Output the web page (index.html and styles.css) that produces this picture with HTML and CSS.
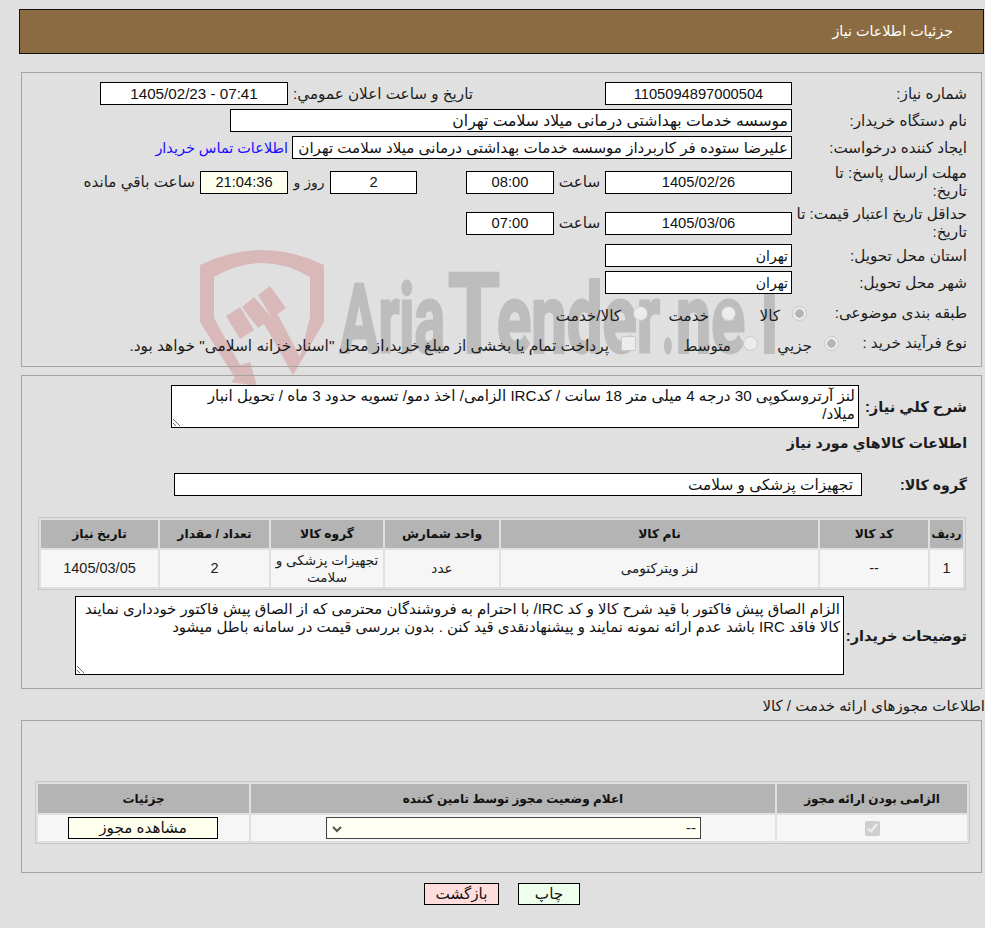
FILE: index.html
```html
<!DOCTYPE html>
<html lang="fa" dir="rtl">
<head>
<meta charset="utf-8">
<title>جزئیات اطلاعات نیاز</title>
<link rel="stylesheet" href="styles.css">
</head>
<body>
<div class="page">
  <svg class="watermark" viewBox="190 240 630 200" width="630" height="200" aria-hidden="true">
    <path class="wm-red" d="M200 265Q262 235 324 265V322L293 375L263 322L277 313L300 357L310 317V277Q262 249 214 277V318L240 365L250 362L257 386L231 382L235 378L200 322Z"/>
    <path class="wm-red" d="M226 316L240 307L254 330L240 339ZM242 307L254 297L272 318L258 328ZM258 295L270 286L286 308L272 318Z"/>
    <text class="wm-text" x="340" y="352" textLength="105" lengthAdjust="spacingAndGlyphs">Aria</text>
    <text class="wm-text wm-cap" x="448" y="352" textLength="52" lengthAdjust="spacingAndGlyphs">T</text>
    <text class="wm-text" x="497" y="352" textLength="163" lengthAdjust="spacingAndGlyphs">ender</text>
    <text class="wm-text" x="662" y="352" textLength="12" lengthAdjust="spacingAndGlyphs">.</text>
    <text class="wm-text" x="676" y="352" textLength="69" lengthAdjust="spacingAndGlyphs">ne</text>
    <text class="wm-text wm-cap" x="750" y="352" textLength="39" lengthAdjust="spacingAndGlyphs">T</text>
  </svg>

  <header class="title-bar">جزئیات اطلاعات نیاز</header>

  <section class="panel panel-info">
    <div class="row">
      <span class="label">شماره نیاز:</span>
      <input class="field w187 center" value="1105094897000504" readonly>
      <span class="label announce">تاریخ و ساعت اعلان عمومي:</span>
      <input class="field w188 center stamp" value="07:41 - 1405/02/23" readonly>
    </div>
    <div class="row mt4">
      <span class="label">نام دستگاه خریدار:</span>
      <input class="field w562 wide" value="موسسه خدمات بهداشتی درمانی میلاد سلامت تهران" readonly>
    </div>
    <div class="row mt4">
      <span class="label">ایجاد کننده درخواست:</span>
      <input class="field w500" value="علیرضا ستوده فر کاربرداز موسسه خدمات بهداشتی درمانی میلاد سلامت تهران" readonly>
      <a class="contact" href="#">اطلاعات تماس خریدار</a>
    </div>
    <div class="row tall mt5">
      <span class="label narrow">مهلت ارسال پاسخ: تا تاریخ:</span>
      <input class="field w187 center" value="1405/02/26" readonly>
      <span class="unit">ساعت</span>
      <input class="field w88 center" value="08:00" readonly>
      <input class="field w87 center gap49" value="2" readonly>
      <span class="unit days">روز و</span>
      <input class="field w88 center timer" value="21:04:36" readonly>
      <span class="remain">ساعت باقي مانده</span>
    </div>
    <div class="row tall mt5">
      <span class="label">حداقل تاریخ اعتبار قیمت: تا تاریخ:</span>
      <input class="field w187 center" value="1405/03/06" readonly>
      <span class="unit">ساعت</span>
      <input class="field w88 center" value="07:00" readonly>
    </div>
    <div class="row mt3">
      <span class="label">استان محل تحویل:</span>
      <input class="field w187 short" value="تهران" readonly>
    </div>
    <div class="row mt4">
      <span class="label">شهر محل تحویل:</span>
      <input class="field w187 short" value="تهران" readonly>
    </div>
    <div class="row choice choice-a">
      <span class="label">طبقه بندی موضوعی:</span>
      <label class="opt o71"><input type="radio" name="cat" disabled checked><span>کالا</span></label>
      <label class="opt o88"><input type="radio" name="cat" disabled><span>خدمت</span></label>
      <label class="opt"><input type="radio" name="cat" disabled><span>کالا/خدمت</span></label>
    </div>
    <div class="row choice choice-b">
      <span class="label">نوع فرآیند خرید :</span>
      <label class="opt o81"><input type="radio" name="proc" disabled checked><span>جزيي</span></label>
      <label class="opt o122"><input type="radio" name="proc" disabled><span>متوسط</span></label>
      <label class="opt"><input type="checkbox" disabled><span>پرداخت تمام یا بخشی از مبلغ خرید،از محل "اسناد خزانه اسلامی" خواهد بود.</span></label>
    </div>
  </section>

  <section class="panel panel-goods">
    <div class="row">
      <span class="label strong l108">شرح كلي نياز:</span>
      <textarea class="note note-short" readonly>لنز آرتروسکوپی 30 درجه 4 میلی متر 18 سانت / کدIRC الزامی/ اخذ دمو/ تسویه حدود 3 ماه / تحویل انبار میلاد/</textarea>
    </div>
    <h2 class="sub-title">اطلاعات كالاهاي مورد نياز</h2>
    <div class="row group-row">
      <span class="label strong l105">گروه کالا:</span>
      <input class="field w688 indent" value="تجهیزات پزشکی و سلامت" readonly>
    </div>
    <table class="grid goods">
      <thead>
        <tr><th class="c1">ردیف</th><th class="c2">کد کالا</th><th class="c3">نام کالا</th><th class="c4">واحد شمارش</th><th class="c5">گروه کالا</th><th class="c6">تعداد / مقدار</th><th class="c7">تاریخ نیاز</th></tr>
      </thead>
      <tbody>
        <tr><td class="num">1</td><td class="num">--</td><td>لنز ویترکتومی</td><td>عدد</td><td>تجهیزات پزشکی و سلامت</td><td class="num">2</td><td class="num">1405/03/05</td></tr>
      </tbody>
    </table>
    <div class="row buyer-row">
      <span class="label strong l123">توضیحات خریدار:</span>
      <textarea class="note note-tall" readonly>الزام الصاق پیش فاکتور با قید شرح کالا و کد IRC/ با احترام به فروشندگان محترمی که از الصاق پیش فاکتور خودداری نمایند کالا فاقد IRC باشد عدم ارائه نمونه نمایند و پیشنهادنقدی قید کنن . بدون بررسی قیمت در سامانه باطل میشود</textarea>
    </div>
  </section>

  <h2 class="license-title">اطلاعات مجوزهای ارائه خدمت / کالا</h2>

  <section class="panel panel-license">
    <table class="grid license">
      <thead>
        <tr><th class="d1">الزامی بودن ارائه مجوز</th><th class="d2">اعلام وضعیت مجوز توسط تامین کننده</th><th class="d3">جزئیات</th></tr>
      </thead>
      <tbody>
        <tr>
          <td><input class="check" type="checkbox" checked disabled></td>
          <td><select class="status"><option>--</option></select></td>
          <td><button class="view" type="button">مشاهده مجوز</button></td>
        </tr>
      </tbody>
    </table>
  </section>

  <div class="actions">
    <button class="btn print" type="button">چاپ</button>
    <button class="btn back" type="button">بازگشت</button>
  </div>
</div>
</body>
</html>
```
FILE: styles.css
```css
* { box-sizing: border-box; }
html, body { margin: 0; padding: 0; background: #e0e0e0; }
body {
  font-family: "Liberation Sans", "DejaVu Sans", sans-serif;
  font-size: 15.2px;
  line-height: 18px;
  color: #1c1c1c;
}
.page { position: relative; width: 985px; height: 928px; overflow: hidden; }
.watermark { position: absolute; left: 190px; top: 240px; z-index: 0; }
.wm-red { fill: #d9b8ba; }
.wm-text {
  direction: ltr;
  unicode-bidi: bidi-override;
  fill: #bdbdbd;
  stroke: #bdbdbd;
  stroke-width: 3px;
  font-family: Roboto, sans-serif;
  font-weight: 700;
  font-size: 97px;
}
.wm-cap { font-size: 112px; }

.title-bar {
  position: relative;
  margin: 9px 1px 0 19px;
  height: 45px;
  padding: 0 30px 0 0;
  border: 1px solid #111;
  background: #8b6c42;
  color: #fff;
  line-height: 43px;
  font-size: 14.3px;
}
.panel { position: relative; z-index: 1; border: 1px solid #a4a4a4; margin: 0 3px 0 21px; }
.panel-info { margin-top: 18px; height: 295px; padding: 9px 14px 0 0; }
.panel-goods { margin-top: 8px; height: 314px; padding: 9px 14px 0 0; }
.panel-license { margin-top: 5px; height: 153px; padding: 60px 11px 0 0; }

.row { display: flex; align-items: center; min-height: 23px; }
.row.tall { height: 36px; }
.mt3 { margin-top: 3px; }
.mt4 { margin-top: 4px; }
.mt5 { margin-top: 5px; }
.label { flex: none; width: 175px; padding-left: 1px; }
.narrow { padding-left: 16px; }
.strong { font-weight: 700; font-size: 14.2px; white-space: nowrap; }
.l108 { width: 108px; padding: 0; font-size: 14.7px; }
.l105 { width: 105px; padding: 0; }
.l123 { width: 123px; padding: 0; font-size: 14.6px; }
.announce { width: 185px; margin-right: 132px; padding: 0 0 0 5px; }

.field {
  flex: none;
  height: 23px;
  border: 1px solid #000;
  background: #fff;
  color: #111;
  font: inherit;
  font-size: 15.1px;
  padding: 0 3px;
  direction: rtl;
}
.center { text-align: center; font-size: 14.7px; }
.stamp { font-size: 15.2px; }
.wide { font-size: 15.66px; }
.short { font-size: 14px; }
.indent { padding-right: 8px; font-size: 15.3px; }
.w87 { width: 87px; }
.w88 { width: 88px; }
.w187 { width: 187px; }
.w188 { width: 188px; }
.w500 { width: 500px; }
.w562 { width: 562px; }
.w688 { width: 688px; }
.gap49 { margin-right: 49px; }
.timer { background: #ffffee; }
.unit { flex: none; width: 51px; text-align: center; }
.days { width: 42px; font-size: 14px; }
.remain { margin-right: 5px; }
.contact { margin-right: 4px; color: #1a0dff; text-decoration: none; font-size: 14.45px; }

.choice { height: 30px; }
.choice-a { margin-top: 4px; }
.choice-a .label { width: 160px; }
.choice-b .label { width: 128px; }
.opt { display: flex; align-items: center; flex: none; }
.opt span { margin-right: 12px; padding-top: 5px; }
.choice-b .opt:last-child span { font-size: 15.4px; }
.o71 { width: 71px; }
.o81 { width: 81px; }
.o88 { width: 88px; }
.o122 { width: 122px; }
.opt input {
  appearance: none;
  flex: none;
  width: 15px;
  height: 15px;
  margin: 0;
  border: 1px solid #c9c9c9;
  border-radius: 50%;
  background: #ececec;
}
.opt input:checked { background: radial-gradient(circle, #b5b5b5 0 4px, #ececec 4.5px); }
.opt input[type="checkbox"] { border-radius: 2px; }

.note {
  flex: none;
  display: block;
  width: 688px;
  border: 1px solid #000;
  background: #fff;
  color: #111;
  font: inherit;
  padding: 1px 3px;
  margin: 0;
  overflow: hidden;
}
.note-short { height: 43px; padding-left: 12px; }
.note-tall { width: 769px; height: 79px; padding-top: 3px; font-size: 14.95px; }
.sub-title {
  margin: 5px 0 0;
  height: 21px;
  font-size: 14.2px;
  line-height: 21px;
  font-weight: 700;
}
.group-row { margin-top: 19px; }

.grid {
  border: 1px solid #c8c8c8;
  border-spacing: 2px;
  border-collapse: separate;
  table-layout: fixed;
  background: #e0e0e0;
}
.grid th {
  background: #b4b4b4;
  color: #111;
  font-weight: 700;
  padding: 0;
  height: 29px;
  white-space: nowrap;
}
.grid td {
  background: #f6f6f6;
  text-align: center;
  padding: 0;
}
.goods { width: 928px; margin: 21px 1px 0 0; }
.goods td { height: 37px; font-size: 13.6px; line-height: 17px; }
.goods td.num { font-size: 14.5px; }
.goods th { height: 28px; font-size: 12.3px; }
.goods th.c1 { font-size: 11.4px; }
.c1 { width: 33px; }
.c2 { width: 108px; }
.c3 { width: 317px; }
.c4 { width: 114px; }
.c5 { width: 112px; }
.c6 { width: 109px; }
.c7 { width: 117px; }
.buyer-row { margin-top: 6px; }

.license-title {
  margin: 8px 0 0;
  height: 18px;
  font-size: 15px;
  line-height: 18px;
  font-weight: 400;
  white-space: nowrap;
}
.license { width: 935px; }
.license th { font-size: 12px; }
.license td { height: 26px; }
.d1 { width: 190px; }
.d2 { width: 524px; }
.d3 { width: 211px; }
.check { width: 15px; height: 15px; margin: 0; vertical-align: middle; }
.status {
  appearance: none;
  display: block;
  width: 375px;
  height: 22px;
  margin: 0 74px 0 0;
  padding: 0 4px 0 20px;
  border: 1px solid #444;
  border-radius: 0;
  background: #fffff4 url("data:image/svg+xml,%3Csvg xmlns='http://www.w3.org/2000/svg' width='10' height='7'%3E%3Cpath d='M1 1l4 4 4-4' fill='none' stroke='%23555' stroke-width='2'/%3E%3C/svg%3E") no-repeat 5px 8px;
  color: #222;
  font: inherit;
}
.view {
  display: block;
  width: 150px;
  height: 22px;
  margin: 0 31px 0 0;
  border: 1px solid #000;
  background: #ffffee;
  color: #111;
  font: inherit;
  padding: 0;
}
.actions { display: flex; gap: 19px; margin: 10px 405px 0 0; }
.btn {
  height: 22px;
  border: 1px solid #000;
  color: #111;
  font: inherit;
  padding: 0;
}
.print { width: 62px; background: #eeffee; }
.back { width: 75px; background: #ffdddd; }
```
